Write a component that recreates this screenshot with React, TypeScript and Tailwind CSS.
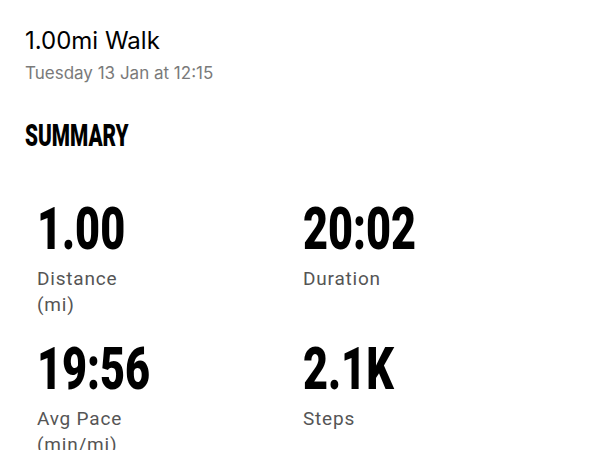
const stats = [
  { value: "1.00", label: "Distance", unit: "(mi)" },
  { value: "20:02", label: "Duration" },
  { value: "19:56", label: "Avg Pace", unit: "(min/mi)" },
  { value: "2.1K", label: "Steps" },
];

export default function App() {
  return (
    <div className="w-[600px] h-[450px] overflow-hidden bg-white font-['Roboto',sans-serif]">
      <div className="px-[25px] pt-[26px]">
        <h1 className="font-['Inter','Noto_Sans',sans-serif] text-[24px] leading-[30px] text-black">1.00mi Walk</h1>
        <p className="mt-[6px] font-['Inter','Noto_Sans',sans-serif] text-[17px] leading-[22px] text-[#7a7a7a]">
          Tuesday 13 Jan at 12:15
        </p>
        <h2 className="mt-[36px] origin-left scale-x-[0.67] text-[31px] leading-[32px] font-black text-black">SUMMARY</h2>
      </div>

      <div className="mt-[54px] grid grid-cols-[266px_1fr] gap-y-[28px] pl-[37px]">
        {stats.map((s) => (
          <div key={s.label} className="flex flex-col">
            <div className="origin-left scale-x-[0.72] text-[60px] leading-[46px] font-black text-black">
              {s.value}
            </div>
            <div className="mt-[14px] text-[19px] leading-[26px] tracking-[0.8px] text-[#555]">
              <div>{s.label}</div>
              {s.unit && <div>{s.unit}</div>}
            </div>
          </div>
        ))}
      </div>
    </div>
  );
}
